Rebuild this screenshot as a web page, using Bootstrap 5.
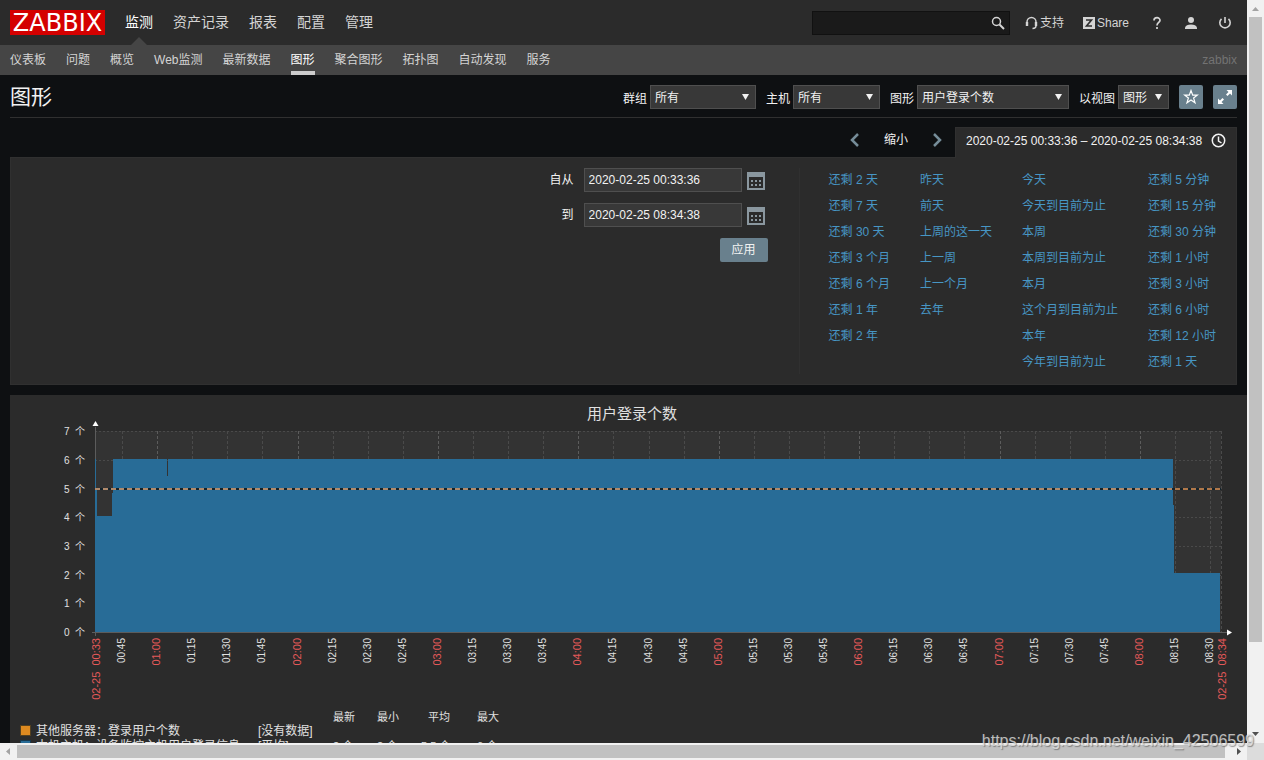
<!DOCTYPE html>
<html lang="zh-CN">
<head>
<meta charset="utf-8">
<meta name="viewport" content="width=device-width, initial-scale=1">
<title>图形 - Zabbix</title>
<link rel="stylesheet" href="https://cdn.jsdelivr.net/npm/bootstrap@5.3.0/dist/css/bootstrap.min.css">
<style>
body{font:12px/18px "Liberation Sans","Noto Sans CJK SC",sans-serif;background:#0e1012;color:#f2f2f2}
a{text-decoration:none}
svg{display:block;flex:none}
.view-main{background:#0e1012}
.top-bar{height:45px;background:#2b2b2b;padding:0 10px}
.logo{width:95px;height:25px;background:#d40000;color:#fff;font:24px/27px "DejaVu Sans",sans-serif;text-align:center}
.logo:hover{color:#fff}
.main-menu a,.sub-menu a,.tool-link{color:#d4d4d4}
.main-menu{font-size:14px;gap:20px}
.main-menu a{line-height:45px;position:relative}
.main-menu a.active,.sub-menu a.active{color:#fff}
.main-menu a.active::after{content:"";position:absolute;left:50%;bottom:0;margin-left:-8px;border:8px solid transparent;border-top:0;border-bottom-color:#454545}
.search-box{width:198px;height:24px;background:#1a1a1a;border:1px solid #111}
.search-box input{background:none;border:0;color:#f2f2f2;min-width:0;outline:0}
.search-box button,.plain-btn{background:none;border:0;padding:0;color:inherit}
.tools{gap:10px}
.tool-text{gap:19px;margin:0 16px 0 15px}
.tool-link.square{width:24px}
.sub-bar{height:30px;background:#454545;padding:0 10px}
.sub-menu{gap:20px}
.sub-menu a{height:30px;line-height:30px;border-bottom:4px solid transparent}
.sub-menu a.active{border-bottom-color:#ccc}
.server-name{color:#737373}
.page-head{margin:0 10px;height:43px;padding-top:2px;border-bottom:1px solid #303030}
.page-head h1{font-size:21px;line-height:30px;margin:0}
.picker{gap:10px}
.picker label{margin-right:3px}
.picker select{appearance:none;height:24px;border:1px solid #4f4f4f;border-radius:0;color:#f2f2f2;padding:2px 4px 0;font-size:12px;
 background:#383838 url("data:image/svg+xml,%3Csvg xmlns='http://www.w3.org/2000/svg' width='7' height='6'%3E%3Cpath d='M0 0h7L3.500 6z' fill='%23f2f2f2'/%3E%3C/svg%3E") no-repeat right 6px top 8px}
.w-group{width:106px}.w-host{width:87px}.w-graph{width:152px}.w-view{width:51px}
.icon-btn{width:24px;height:24px;background:#69808d;border:0;border-radius:2px;color:#fff;padding:0}
.time-nav{margin:9px 10px 0;height:30px}
.time-step{gap:24px;margin-right:13px;padding-bottom:4px}
.time-nav .arrow{color:#768d99}
.time-tab{width:282px;height:31px;padding:0 10px 5px;background:#2b2b2b;border:1px solid #303030;border-bottom:0;color:#f2f2f2;position:relative}
.filter-panel{margin:0 10px;background:#2b2b2b;border:1px solid #303030;padding:10px 20px 10px 10px;height:228px}
.range-form{display:grid;grid-template-columns:auto 184px;column-gap:10px;row-gap:11px;align-content:start}
.range-form label{line-height:24px;text-align:right}
.range-form input{width:158px;height:24px;background:#383838;border:1px solid #4f4f4f;color:#f2f2f2;padding:0 4px;outline:0}
.cal-btn{margin:2px 0 0 5px}
.apply-btn{width:48px;height:24px;background:#69808d;border:0;border-radius:2px;color:#f2f2f2;grid-column:2;justify-self:end}
.quick-links{border-left:1px solid #303030;margin-left:31px;padding-left:29px;gap:30px;height:206px}
.quick-links a{color:#4796c4;line-height:26px;white-space:nowrap}
.quick-links div{margin-top:-1px}
.chart-wrap{margin:10px 0 0 10px;background:#2b2b2b}
.bar-v{width:17px;background:#f1f1f1}
.bar-v .thumb{width:13px;flex:626;background:#c1c1c1}
.bar-v .rest{flex:84}
.bar-h{height:17px;background:#f1f1f1}
.bar-h .thumb{height:13px;flex:1208;background:#c1c1c1}
.bar-h .rest{flex:5}
.bar-btn{width:17px;height:17px}
.corner{width:17px;background:#dcdcdc}
.site-mark{position:absolute;right:10px;bottom:7px;font-size:16px;line-height:24px;color:rgba(225,225,225,.8);text-shadow:1px 1px 1px rgba(80,80,80,.6);pointer-events:none}
</style>
</head>
<body>
<div class="vh-100 d-flex flex-column overflow-hidden position-relative">
 <div class="d-flex flex-grow-1 overflow-hidden">
  <div class="view-main flex-grow-1 overflow-hidden">
   <header class="top-bar d-flex align-items-center">
    <a class="logo" href="#">ZABBIX</a>
    <nav class="main-menu d-flex ms-3 ps-1">
     <a class="active" href="#">监测</a><a href="#">资产记录</a><a href="#">报表</a><a href="#">配置</a><a href="#">管理</a>
    </nav>
    <form class="search-box d-flex align-items-center ms-auto">
     <input class="flex-grow-1" type="text" aria-label="搜索">
     <button type="button" class="me-1" aria-label="搜索"><svg width="14" height="14" fill="none" stroke="#d4d4d4"><circle cx="5.500" cy="5.500" r="4" stroke-width="1.500"/><path d="m8.500 8.500 4.500 4.500" stroke-width="2"/></svg></button>
    </form>
    <div class="tool-text d-flex">
     <a class="tool-link d-flex align-items-center" href="#"><svg width="15" height="14" fill="none" stroke="currentColor" stroke-width="1.500"><path d="M2 9V6a4.500 4.500 0 0 1 9 0v3.500q0 3-3.500 3"/><path d="M2 6v4M11 6v4" stroke-width="2.400"/></svg>支持</a>
     <a class="tool-link d-flex align-items-center" href="#"><svg width="14" height="12"><path fill="currentColor" d="M0 0h12v12H0z"/><path d="M3 3h5.500L3.500 9H9" fill="none" stroke="#2b2b2b" stroke-width="1.600"/></svg>Share</a>
    </div>
    <div class="tools d-flex align-items-center">
     <a class="tool-link square d-flex justify-content-center" href="#" aria-label="帮助"><svg width="10" height="14" fill="none" stroke="currentColor" stroke-width="1.700"><path d="M2 4.500C2 .8 8 .8 8 4.300 8 6.500 5 6.500 5 9.500M5 11v2"/></svg></a>
     <a class="tool-link square d-flex justify-content-center" href="#" aria-label="用户"><svg width="12" height="12" fill="currentColor"><circle cx="6" cy="3" r="3"/><path d="M0 12V10.500q1-3 6-3t6 3V12z"/></svg></a>
     <a class="tool-link square d-flex justify-content-center" href="#" aria-label="退出"><svg width="14" height="14" fill="none" stroke="currentColor" stroke-width="1.600"><path d="M3.500 2.800a5.200 5.200 0 1 0 7 0M7 1v6"/></svg></a>
    </div>
   </header>
   <div class="sub-bar d-flex justify-content-between align-items-center">
    <nav class="sub-menu d-flex">
     <a href="#">仪表板</a><a href="#">问题</a><a href="#">概览</a><a href="#">Web监测</a><a href="#">最新数据</a><a class="active" href="#">图形</a><a href="#">聚合图形</a><a href="#">拓扑图</a><a href="#">自动发现</a><a href="#">服务</a>
    </nav>
    <span class="server-name">zabbix</span>
   </div>
   <div class="page-head d-flex justify-content-between align-items-center">
    <h1 class="fw-normal">图形</h1>
    <form class="picker d-flex align-items-center">
     <div class="d-flex align-items-center"><label class="pt-1" for="g1">群组</label><select class="w-group" id="g1"><option>所有</option></select></div>
     <div class="d-flex align-items-center"><label class="pt-1" for="g2">主机</label><select class="w-host" id="g2"><option>所有</option></select></div>
     <div class="d-flex align-items-center"><label class="pt-1" for="g3">图形</label><select class="w-graph" id="g3"><option>用户登录个数</option></select></div>
     <div class="d-flex align-items-center"><label class="pt-1" for="g4">以视图</label><select class="w-view" id="g4"><option>图形</option></select></div>
     <button type="button" class="icon-btn d-flex align-items-center justify-content-center" aria-label="收藏"><svg width="16" height="16" fill="none" stroke="#fff" stroke-width="1.200"><path d="m8 1.500 1.700 4.600h4.600l-3.700 2.900 1.400 4.700L8 10.900l-4 2.800L5.400 9 1.700 6.100h4.600z"/></svg></button>
     <button type="button" class="icon-btn d-flex align-items-center justify-content-center" aria-label="全屏"><svg width="16" height="16" fill="#fff"><path d="M9.500 1H15v5.500l-2-2L10.500 7 9 5.500 11.500 3zM1 9.500l2 2L5.500 9 7 10.500 4.500 13l2 2H1z"/></svg></button>
    </form>
   </div>
   <div class="time-nav d-flex justify-content-end">
    <div class="time-step d-flex align-items-center">
     <button type="button" class="plain-btn arrow" aria-label="上一段"><svg width="10" height="14" fill="none" stroke="currentColor" stroke-width="2.500"><path d="M8 1 2 7l6 6"/></svg></button>
     <button type="button" class="plain-btn">缩小</button>
     <button type="button" class="plain-btn arrow" aria-label="下一段"><svg width="10" height="14" fill="none" stroke="currentColor" stroke-width="2.500"><path d="m2 1 6 6-6 6"/></svg></button>
    </div>
    <a class="time-tab d-flex align-items-center justify-content-between" href="#">2020-02-25 00:33:36 – 2020-02-25 08:34:38<svg width="15" height="15" fill="none" stroke="#f2f2f2" stroke-width="1.500"><circle cx="7.500" cy="7.500" r="6.200"/><path d="M7.500 3.500v4.500l3 2"/></svg></a>
   </div>
   <section class="filter-panel d-flex justify-content-end">
    <form class="range-form">
     <label for="from">自从</label>
     <div class="d-flex align-items-center"><input id="from" type="text" value="2020-02-25 00:33:36"><button type="button" class="plain-btn cal-btn" aria-label="选择开始日期"><svg width="18" height="18"><use href="#cal"/></svg></button></div>
     <label for="to">到</label>
     <div class="d-flex align-items-center"><input id="to" type="text" value="2020-02-25 08:34:38"><button type="button" class="plain-btn cal-btn" aria-label="选择结束日期"><svg width="18" height="18"><use href="#cal"/></svg></button></div>
     <button type="button" class="apply-btn">应用</button>
    </form>
    <div class="quick-links d-flex">
     <div class="d-flex flex-column"><a href="#">还剩 2 天</a><a href="#">还剩 7 天</a><a href="#">还剩 30 天</a><a href="#">还剩 3 个月</a><a href="#">还剩 6 个月</a><a href="#">还剩 1 年</a><a href="#">还剩 2 年</a></div>
     <div class="d-flex flex-column"><a href="#">昨天</a><a href="#">前天</a><a href="#">上周的这一天</a><a href="#">上一周</a><a href="#">上一个月</a><a href="#">去年</a></div>
     <div class="d-flex flex-column"><a href="#">今天</a><a href="#">今天到目前为止</a><a href="#">本周</a><a href="#">本周到目前为止</a><a href="#">本月</a><a href="#">这个月到目前为止</a><a href="#">本年</a><a href="#">今年到目前为止</a></div>
     <div class="d-flex flex-column"><a href="#">还剩 5 分钟</a><a href="#">还剩 15 分钟</a><a href="#">还剩 30 分钟</a><a href="#">还剩 1 小时</a><a href="#">还剩 3 小时</a><a href="#">还剩 6 小时</a><a href="#">还剩 12 小时</a><a href="#">还剩 1 天</a></div>
    </div>
   </section>
   <div class="chart-wrap">
    <svg id="chart" class="w-100 h-auto" viewBox="0 0 1237 370" fill="#e0e0e0" role="img" aria-label="用户登录个数"></svg>
   </div>
  </div>
  <div class="bar-v d-flex flex-column align-items-center" aria-hidden="true">
   <svg class="bar-btn" viewBox="0 0 17 17"><path d="M5 11h7L8.500 7z" fill="#a3a3a3"/></svg>
   <div class="thumb"></div><div class="rest"></div>
   <svg class="bar-btn" viewBox="0 0 17 17"><path d="M5 6h7l-3.500 4z" fill="#505050"/></svg>
  </div>
 </div>
 <div class="d-flex">
  <div class="bar-h d-flex align-items-center flex-grow-1" aria-hidden="true">
   <svg class="bar-btn" viewBox="0 0 17 17"><path d="M10 5v7L6 8.500z" fill="#a3a3a3"/></svg>
   <div class="thumb"></div><div class="rest"></div>
   <svg class="bar-btn" viewBox="0 0 17 17"><path d="M7 5v7l4-3.500z" fill="#505050"/></svg>
  </div>
  <div class="corner"></div>
 </div>
 <div class="site-mark">https://blog.csdn.net/weixin_42506599</div>
</div>
<svg width="0" height="0" class="position-absolute" aria-hidden="true"><symbol id="cal" viewBox="0 0 18 18"><path d="M1 1h16v16H1z" fill="none" stroke="#8a979f" stroke-width="2"/><path d="M0 0h18v5H0z" fill="#8a979f"/><path d="M4 9h10M4 13h10" stroke="#8a979f" stroke-width="2" stroke-dasharray="2 2"/></symbol></svg>
<script>
// Draws the area graph: grid, series, trigger line, axes and legend
const svg = document.getElementById('chart');
const L = 85, R = 1211, T = 36, B = 237, out = [];
const line = (x1, y1, x2, y2, c, extra = '') => out.push(`<path d="M${x1} ${y1}L${x2} ${y2}" stroke="${c}" ${extra}/>`);
const text = (x, y, s, size, extra = '') => out.push(`<text x="${x}" y="${y}" font-size="${size}" ${extra}>${s}</text>`);
const vlabel = (x, s, size, color) => out.push(`<text transform="translate(${x} 243) rotate(-90)" text-anchor="end" font-size="${size}" fill="${color}">${s}</text>`);

out.push(`<path d="M${L} ${T}H${R}V${B}H${L}z" fill="#333"/>`);
for (let v = 0; v <= 7; v++) {
  const y = Math.round(B - v * 28.7);
  if (v) line(L, y + .5, R, y + .5, '#4a4a4a', 'stroke-dasharray="2 2"');
  text(75, y + 4, v + '\u00a0\u00a0个', 10, 'text-anchor="end"');
}
for (let i = 0; i < 32; i++) {
  const m = 45 + i * 15, x = Math.round(112 + i * 35.1), major = m % 60 === 0;
  const s = String(Math.floor(m / 60)).padStart(2, '0') + ':' + String(m % 60).padStart(2, '0');
  line(x + .5, T, x + .5, B, major ? '#5c5c5c' : '#4a4a4a', 'stroke-dasharray="3 2"');
  vlabel(x + 3, s, major ? 11 : 10, major ? '#e45959' : '#e0e0e0');
}
line(R + .5, T, R + .5, B, '#4a4a4a', 'stroke-dasharray="3 2"');
vlabel(90, '02-25\u00a0 00:33', 11, '#e45959');
vlabel(1216, '02-25\u00a0 08:34', 11, '#e45959');
out.push(`<path d="M85 ${B}V64h1v30h1v27h15V98h1V64h54v17h1V64H1163v46h1v68h46V${B}z" fill="#286c97"/>`);
line(L, 94, R, 94, '#13232c', 'stroke-width="2"');
line(L, 94, R, 94, '#b08a6c', 'stroke-width="2" stroke-dasharray="5 3"');
line(1165, 94, 1210, 94, '#b0784a', 'stroke-width="2" stroke-dasharray="5 3"');
line(85.5, 32, 85.5, 64, '#5c5c5c');
line(82, 237.5, 1217, 237.5, '#5c5c5c');
line(85.5, 237, 85.5, 241, '#5c5c5c');
out.push('<path d="M82.500 31h6l-3-5z" fill="#fff"/><path d="M1217 234.500v6l5-3z" fill="#fff"/>');
text(622, 24, '用户登录个数', 15, 'text-anchor="middle"');
[[323, '最新'], [367, '最小'], [418, '平均'], [467, '最大']].forEach(h => text(h[0], 326, h[1], 11));
const rows = [
  ['#de8a20', '#54401f', '其他服务器：登录用户个数', '[没有数据]', []],
  ['#286c97', '#163a50', '本机主机：设备监控主机用户登录信息', '[平均]', [[323, '2 个'], [367, '2 个'], [411, '5.5 个'], [467, '6 个']]]
];
rows.forEach((r, i) => {
  const y = 340 + i * 15;
  out.push(`<rect x="10.500" y="${y - 9.5}" width="10" height="10" fill="${r[0]}" stroke="${r[1]}"/>`);
  text(26, y, r[2], 12);
  text(248, y, r[3], 12);
  r[4].forEach(c => text(c[0], y, c[1], 11));
});
svg.innerHTML = out.join('');
</script>
<script src="https://cdn.jsdelivr.net/npm/bootstrap@5.3.0/dist/js/bootstrap.bundle.min.js"></script>
</body>
</html>
